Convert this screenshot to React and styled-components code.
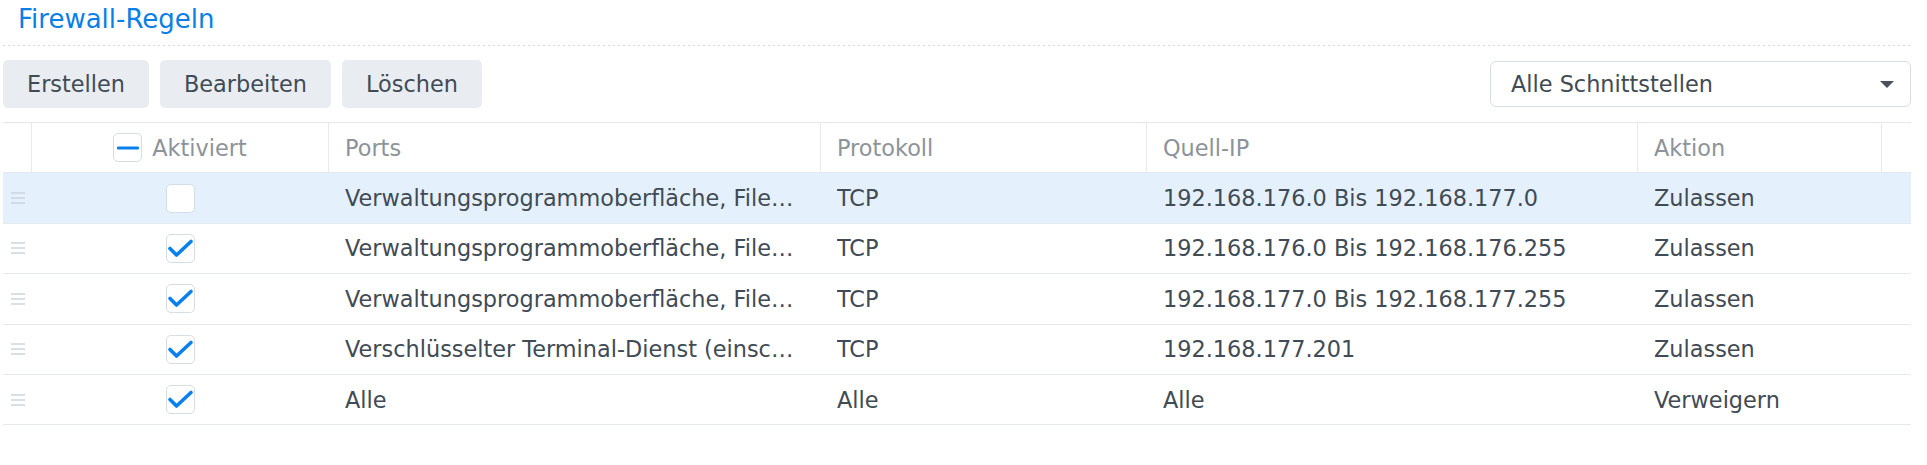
import React from "react";
import styled, { createGlobalStyle } from "styled-components";

const GlobalStyle = createGlobalStyle`
  body {
    margin: 0;
    background: #ffffff;
    font-family: "DejaVu Sans", Verdana, sans-serif;
    color: #414b55;
  }
`;

const Page = styled.div`
  width: 1908px;
  padding-left: 3px;
`;

const Title = styled.h1`
  margin: 0;
  padding: 4px 0 0 15px;
  height: 41px;
  font-size: 26px;
  font-weight: normal;
  color: #0a7fe6;
  line-height: normal;
`;

const Dotted = styled.div`
  height: 1px;
  background-image: repeating-linear-gradient(
    to right,
    #d3d8de 0 2px,
    transparent 2px 5px
  );
`;

const Toolbar = styled.div`
  display: flex;
  align-items: center;
  gap: 11px;
  margin: 14px 0;
  height: 48px;
`;

const Button = styled.button`
  height: 48px;
  padding: 0 24px;
  border: none;
  border-radius: 5px;
  background: #e9edf2;
  color: #414b55;
  font-family: inherit;
  font-size: 22.4px;
  cursor: pointer;
`;

const Spacer = styled.div`
  flex: 1;
`;

const Select = styled.div`
  width: 421px;
  height: 46px;
  box-sizing: border-box;
  border: 1px solid #d5dce4;
  border-radius: 6px;
  display: flex;
  align-items: center;
  justify-content: space-between;
  padding: 0 16px 0 20px;
  font-size: 22.4px;
  color: #414b55;
`;

const Caret = styled.span`
  width: 0;
  height: 0;
  border-left: 7px solid transparent;
  border-right: 7px solid transparent;
  border-top: 7px solid #4a535c;
`;

const Table = styled.div`
  border-top: 1px solid #e3e8ee;
`;

const cols = "29px 297px 492px 326px 491px 244px 1fr";

const HeaderRow = styled.div`
  display: grid;
  grid-template-columns: ${cols};
  height: 49.4px;
  border-bottom: 1px solid #e3e8ee;
`;

const HeadCell = styled.div`
  display: flex;
  align-items: center;
  justify-content: ${(p) => (p.$center ? "center" : "flex-start")};
  gap: 10px;
  padding-left: ${(p) => (p.$center ? "0" : "16px")};
  border-right: ${(p) => (p.$last ? "none" : "1px solid #e6eaef")};
  color: #8d939a;
  font-size: 22.4px;
`;

const Row = styled.div`
  display: grid;
  grid-template-columns: ${cols};
  height: 49.4px;
  border-bottom: 1px solid #e6eaef;
  background: ${(p) => (p.$selected ? "#e4f1fd" : "#ffffff")};
`;

const Cell = styled.div`
  display: flex;
  align-items: center;
  justify-content: ${(p) => (p.$center ? "center" : "flex-start")};
  padding: ${(p) => (p.$center ? "0" : "0 21px 0 16px")};
  min-width: 0;
  font-size: 22.4px;
  color: #414b55;
`;

const Text = styled.span`
  white-space: nowrap;
  overflow: hidden;
  text-overflow: ellipsis;
`;

const Box = styled.span`
  width: 29px;
  height: 29px;
  box-sizing: border-box;
  border: 1.5px solid #d5dde7;
  border-radius: 5px;
  background: #ffffff;
  display: flex;
  align-items: center;
  justify-content: center;
`;

const Handle = () => (
  <svg width="14" height="12" viewBox="0 0 14 12">
    <g stroke="#c8d1dc" strokeWidth="1.4">
      <line x1="0" y1="1" x2="14" y2="1" />
      <line x1="0" y1="6" x2="14" y2="6" />
      <line x1="0" y1="11" x2="14" y2="11" />
    </g>
  </svg>
);

const Check = ({ checked }) => (
  <Box>
    {checked && (
      <svg width="27" height="27" viewBox="0 0 27 27">
        <path
          d="M3 13.5 L9.5 20 L24 6.5"
          fill="none"
          stroke="#0a80ee"
          strokeWidth="3.6"
          strokeLinecap="round"
          strokeLinejoin="round"
        />
      </svg>
    )}
  </Box>
);

const Minus = () => (
  <Box>
    <svg width="22" height="6" viewBox="0 0 22 6">
      <line x1="1.5" y1="3" x2="20.5" y2="3" stroke="#0a80ee" strokeWidth="3.2" strokeLinecap="round" />
    </svg>
  </Box>
);

const rules = [
  { on: false, ports: "Verwaltungsprogrammoberfläche, File Station, SMB", proto: "TCP", ip: "192.168.176.0 Bis 192.168.177.0", action: "Zulassen", selected: true },
  { on: true, ports: "Verwaltungsprogrammoberfläche, File Station, SMB", proto: "TCP", ip: "192.168.176.0 Bis 192.168.176.255", action: "Zulassen" },
  { on: true, ports: "Verwaltungsprogrammoberfläche, File Station, SMB", proto: "TCP", ip: "192.168.177.0 Bis 192.168.177.255", action: "Zulassen" },
  { on: true, ports: "Verschlüsselter Terminal-Dienst (einschließlich SSH)", proto: "TCP", ip: "192.168.177.201", action: "Zulassen" },
  { on: true, ports: "Alle", proto: "Alle", ip: "Alle", action: "Verweigern" },
];

export default function App() {
  return (
    <Page>
      <GlobalStyle />
      <Title>Firewall-Regeln</Title>
      <Dotted />
      <Toolbar>
        <Button>Erstellen</Button>
        <Button>Bearbeiten</Button>
        <Button>Löschen</Button>
        <Spacer />
        <Select>
          <span>Alle Schnittstellen</span>
          <Caret />
        </Select>
      </Toolbar>
      <Table>
        <HeaderRow>
          <HeadCell $center />
          <HeadCell $center>
            <Minus />
            <span>Aktiviert</span>
          </HeadCell>
          <HeadCell>Ports</HeadCell>
          <HeadCell>Protokoll</HeadCell>
          <HeadCell>Quell-IP</HeadCell>
          <HeadCell>Aktion</HeadCell>
          <HeadCell $last />
        </HeaderRow>
        {rules.map((r, i) => (
          <Row key={i} $selected={r.selected}>
            <Cell $center>
              <Handle />
            </Cell>
            <Cell $center>
              <Check checked={r.on} />
            </Cell>
            <Cell>
              <Text>{r.ports}</Text>
            </Cell>
            <Cell>
              <Text>{r.proto}</Text>
            </Cell>
            <Cell>
              <Text>{r.ip}</Text>
            </Cell>
            <Cell>
              <Text>{r.action}</Text>
            </Cell>
            <Cell />
          </Row>
        ))}
      </Table>
    </Page>
  );
}
